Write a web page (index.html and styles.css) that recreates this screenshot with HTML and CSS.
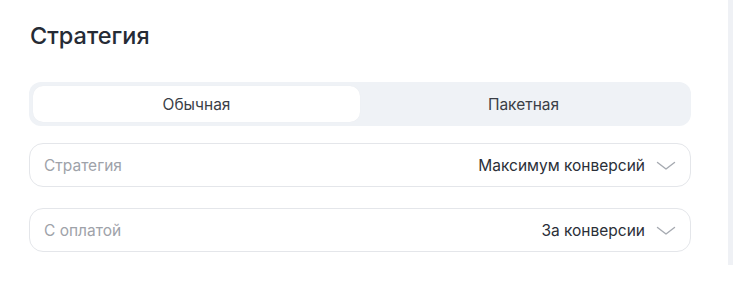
FILE: index.html
```html
<!DOCTYPE html>
<html lang="ru">
<head>
<meta charset="utf-8">
<link rel="stylesheet" href="styles.css">
</head>
<body>
<div class="page">
  <main class="panel">
    <h2 class="title">Стратегия</h2>
    <div class="segmented">
      <div class="seg seg-active">Обычная</div>
      <div class="seg">Пакетная</div>
    </div>
    <div class="field">
      <span class="label">Стратегия</span>
      <span class="value">Максимум конверсий</span>
      <svg class="chev" width="20" height="10" viewBox="0 0 20 10"><path d="M1.5 1.5 L10 8 L18.5 1.5" fill="none" stroke="#a6aab1" stroke-width="1.4" stroke-linecap="round" stroke-linejoin="round"/></svg>
    </div>
    <div class="field">
      <span class="label">С оплатой</span>
      <span class="value">За конверсии</span>
      <svg class="chev" width="20" height="10" viewBox="0 0 20 10"><path d="M1.5 1.5 L10 8 L18.5 1.5" fill="none" stroke="#a6aab1" stroke-width="1.4" stroke-linecap="round" stroke-linejoin="round"/></svg>
    </div>
  </main>
  <div class="scrollbar"></div>
</div>
</body>
</html>
```

FILE: styles.css
```css
html, body {
  margin: 0;
  padding: 0;
  background: #ffffff;
}
body {
  font-family: Inter, "Noto Sans", sans-serif;
  color: #2b2f38;
}
.page {
  display: flex;
  width: 751px;
  height: 304px;
}
.panel {
  width: 662px;
  padding: 21px 0 0 29px;
}
.title {
  margin: 0 0 0 1px;
  font-size: 23.5px;
  font-weight: 500;
  line-height: 29px;
  color: #262b35;
}
.segmented {
  margin-top: 32px;
  display: flex;
  height: 44px;
  box-sizing: border-box;
  padding: 4px;
  background: #eff2f6;
  border-radius: 12px;
}
.seg {
  flex: 1;
  display: flex;
  align-items: center;
  justify-content: center;
  font-size: 15.5px;
  color: #3a3e46;
  border-radius: 10px;
}
.seg-active {
  background: #ffffff;
  box-shadow: 0 0 1px rgba(0,0,0,0.06);
}
.field {
  margin-top: 17px;
  height: 44px;
  box-sizing: border-box;
  border: 1px solid #e4e6ea;
  border-radius: 14px;
  display: flex;
  align-items: center;
  padding: 0 14px 0 14px;
  font-size: 15.5px;
}
.field + .field {
  margin-top: 21px;
}
.label {
  flex: 1;
  color: #9ea2a9;
}
.value {
  color: #2b2f38;
}
.chev {
  margin-left: 11px;
  margin-top: 1px;
}
.scrollbar {
  margin-left: 37px;
  width: 5px;
  height: 265px;
  background: #eff1f5;
}
```
